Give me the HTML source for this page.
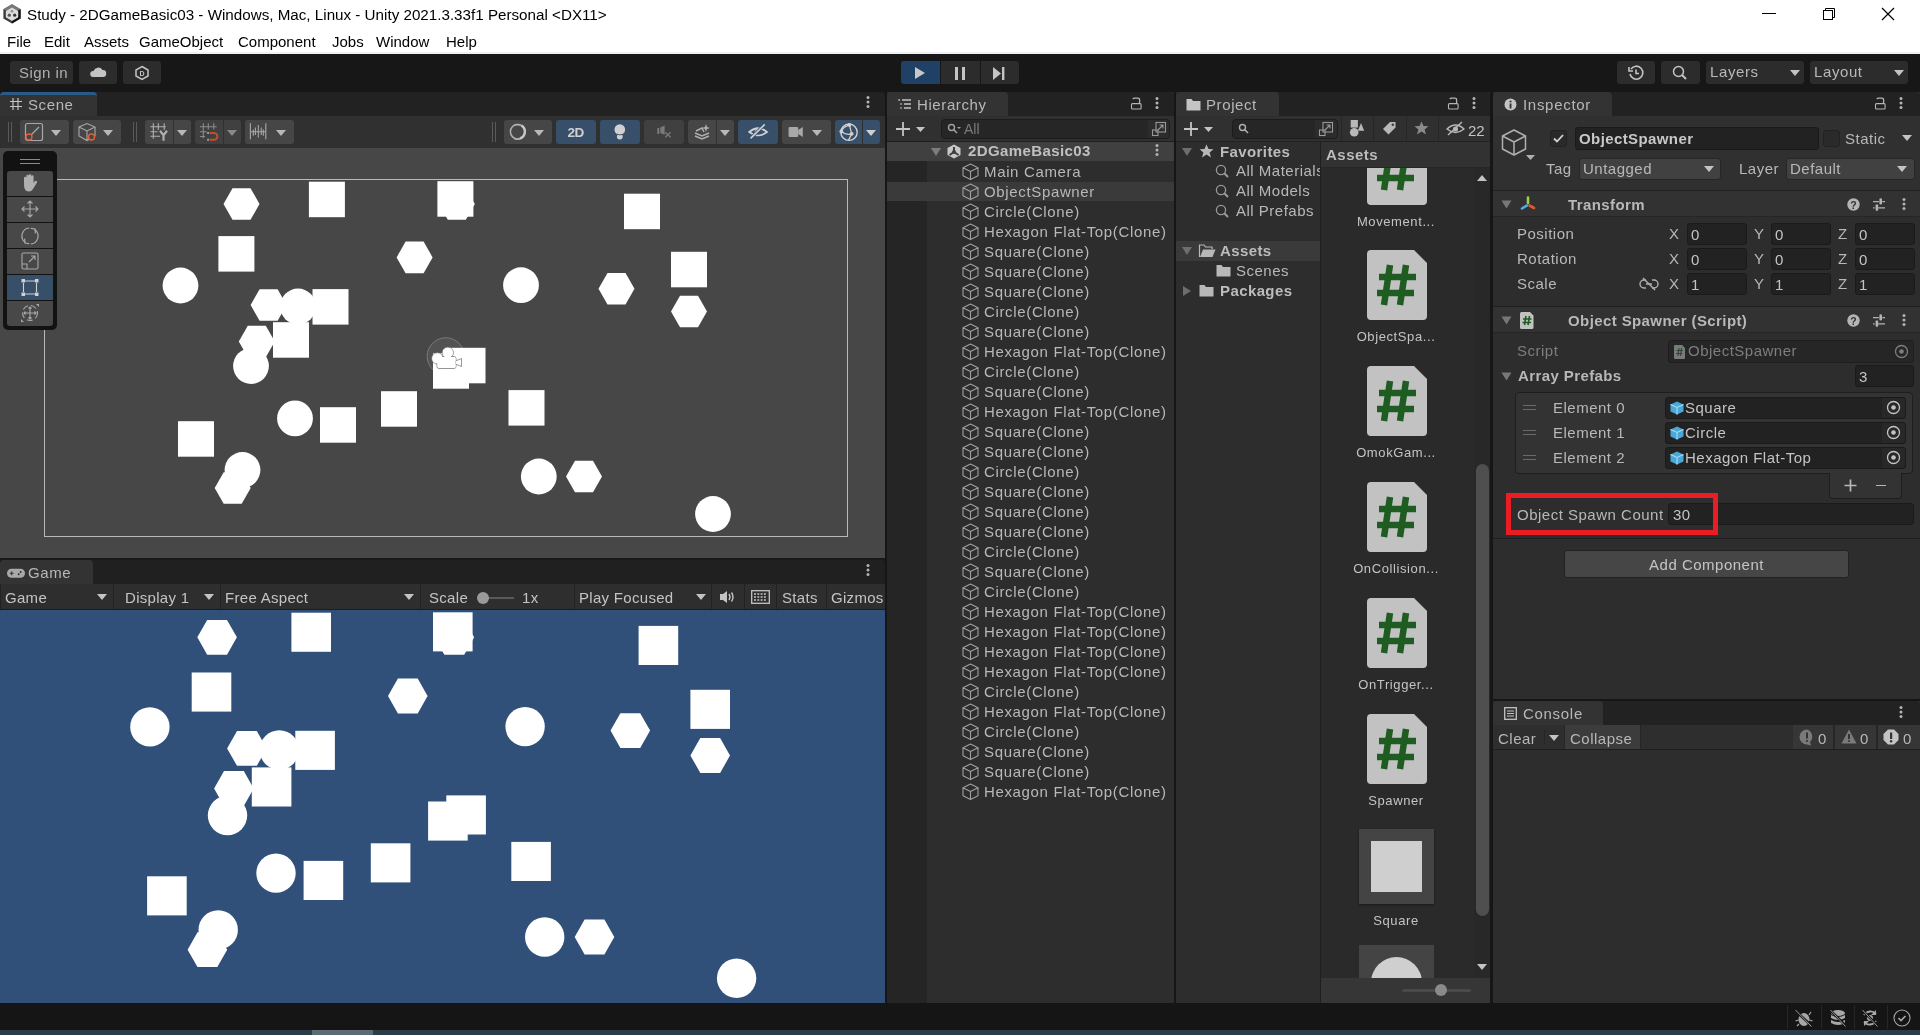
<!DOCTYPE html>
<html><head><meta charset="utf-8">
<style>
*{margin:0;padding:0;box-sizing:border-box}
html,body{width:1920px;height:1035px;overflow:hidden;background:#191919;font-family:"Liberation Sans",sans-serif;color:#c4c4c4}
.a{position:absolute}
.t{position:absolute;white-space:nowrap;line-height:1}
svg{position:absolute;overflow:visible}
.btn{position:absolute;background:#2c2c2c;border-radius:3px}
.tb{position:absolute;background:#3c3c3c;border-radius:3px}
.blue{background:#3a5272}
.ib{position:absolute;fill:none;stroke:#c4c4c4;stroke-width:1.2}
.f{position:absolute;background:#2a2a2a;border-radius:3px;border:1px solid #212121}
.tri{position:absolute;width:0;height:0;border-left:5px solid transparent;border-right:5px solid transparent;border-top:6px solid #c4c4c4}
</style></head><body>
<div id="root" style="position:absolute;left:0;top:0;width:1920px;height:1035px;will-change:transform;background:#191919;overflow:hidden">
<!-- title bar -->
<div class="a" style="left:0;top:0;width:1920px;height:54px;background:#fff"></div>
<div class="a" style="left:0;top:52px;width:1920px;height:2px;background:#f0f0f0"></div>
<svg style="left:3px;top:4px" width="18" height="20"><path d="M9 0.3 L17.6 5.2 V14.6 L9 19.6 L0.4 14.6 V5.2 Z" fill="#3a3a3a"/><path d="M9 0.3 L17.6 5.2 L9 10 L0.4 5.2 Z" fill="#7a7a7a"/><path d="M17.6 5.2 V14.6 L9 19.6 V10 Z" fill="#151515"/><path d="M9 4.2 L14.6 7.5 V13 L9 16.3 L3.4 13 V7.5 Z" fill="#dcdcdc" stroke="#dcdcdc" stroke-linejoin="round" stroke-width="1.2"/><circle cx="9" cy="7.3" r="1.3" fill="#8a8a8a"/><circle cx="6.3" cy="11.2" r="1.6" fill="#555"/><circle cx="11.7" cy="11.2" r="1.6" fill="#333"/></svg>
<div class="t" style="left:27px;top:7px;font-size:15.2px;color:#000">Study - 2DGameBasic03 - Windows, Mac, Linux - Unity 2021.3.33f1 Personal &lt;DX11&gt;</div>
<div class="a" style="left:1762px;top:13px;width:14px;height:1px;background:#000"></div>
<svg style="left:1822px;top:7px" width="14" height="14"><rect x="1.5" y="3.5" width="9" height="9" fill="none" stroke="#000"/><path d="M3.5 3.5 V1.5 H12.5 V10.5 H10.5" fill="none" stroke="#000"/></svg>
<svg style="left:1881px;top:7px" width="14" height="14"><path d="M1 1 L13 13 M13 1 L1 13" stroke="#000" stroke-width="1.2"/></svg>
<div class="t" style="left:7px;top:34px;font-size:15px;color:#000;word-spacing:0">File</div>
<div class="t" style="left:44px;top:34px;font-size:15px;color:#000">Edit</div>
<div class="t" style="left:84px;top:34px;font-size:15px;color:#000">Assets</div>
<div class="t" style="left:139px;top:34px;font-size:15px;color:#000">GameObject</div>
<div class="t" style="left:238px;top:34px;font-size:15px;color:#000">Component</div>
<div class="t" style="left:332px;top:34px;font-size:15px;color:#000">Jobs</div>
<div class="t" style="left:376px;top:34px;font-size:15px;color:#000">Window</div>
<div class="t" style="left:446px;top:34px;font-size:15px;color:#000">Help</div>

<!-- main toolbar -->
<div class="a" style="left:0;top:54px;width:1920px;height:38px;background:#171717"></div>
<div class="btn" style="left:10px;top:61px;width:63px;height:23px"></div>
<div class="t" style="left:19px;top:64.5px;font-size:15px;color:#b0b0b0;letter-spacing:0.45px">Sign in</div>
<div class="btn" style="left:79px;top:61px;width:38px;height:23px"></div>
<svg style="left:89px;top:66px" width="18" height="12"><path d="M4 11 H14 A3.5 3.5 0 0 0 13.5 4 A5 5 0 0 0 4.5 5 A3 3 0 0 0 4 11 Z" fill="#c4c4c4"/></svg>
<div class="btn" style="left:123px;top:61px;width:38px;height:23px"></div>
<svg style="left:134px;top:65px" width="16" height="16"><path d="M8 1.5 L14 5 V11 L8 14.5 L2 11 V5 Z" fill="none" stroke="#c4c4c4" stroke-width="1.5"/><text x="8" y="11" font-size="7" text-anchor="middle" fill="#c4c4c4" font-family="Liberation Sans" font-weight="bold">D</text></svg>
<div class="btn blue" style="left:901px;top:61px;width:39px;height:23px;background:#1f4166;border-radius:3px 0 0 3px"></div>
<svg style="left:914px;top:66px" width="12" height="14"><path d="M1 1 L11 7 L1 13 Z" fill="#c8c8c8"/></svg>
<div class="btn" style="left:941px;top:61px;width:39px;height:23px;border-radius:0"></div>
<div class="a" style="left:955px;top:67px;width:3px;height:13px;background:#c4c4c4"></div>
<div class="a" style="left:962px;top:67px;width:3px;height:13px;background:#c4c4c4"></div>
<div class="btn" style="left:981px;top:61px;width:38px;height:23px;border-radius:0 3px 3px 0"></div>
<svg style="left:992px;top:67px" width="14" height="13"><path d="M1 0 L9 6.5 L1 13 Z" fill="#c4c4c4"/><rect x="10" y="0" width="2.4" height="13" fill="#c4c4c4"/></svg>
<div class="btn" style="left:1617px;top:61px;width:38px;height:23px"></div>
<svg style="left:1627px;top:64px" width="18" height="18"><path d="M4 5 A6.5 6.5 0 1 1 3 10" fill="none" stroke="#c4c4c4" stroke-width="1.6"/><path d="M2 3 V7 H6" fill="none" stroke="#c4c4c4" stroke-width="1.6"/><path d="M9 5.5 V9.5 H12" fill="none" stroke="#c4c4c4" stroke-width="1.6"/></svg>
<div class="btn" style="left:1661px;top:61px;width:39px;height:23px"></div>
<svg style="left:1672px;top:65px" width="16" height="16"><circle cx="6.5" cy="6.5" r="5" fill="none" stroke="#c4c4c4" stroke-width="1.5"/><path d="M10 10 L14 14" stroke="#c4c4c4" stroke-width="2"/></svg>
<div class="btn" style="left:1706px;top:61px;width:98px;height:23px"></div>
<div class="t" style="left:1710px;top:64px;font-size:15px;color:#b8b8b8;letter-spacing:0.6px">Layers</div>
<div class="tri" style="left:1790px;top:70px"></div>
<div class="btn" style="left:1810px;top:61px;width:98px;height:23px"></div>
<div class="t" style="left:1814px;top:64px;font-size:15px;color:#b8b8b8;letter-spacing:0.6px">Layout</div>
<div class="tri" style="left:1894px;top:70px"></div>

<!-- SCENE PANEL -->
<div class="a" style="left:0;top:92px;width:885px;height:24px;background:#222;border-radius:4px 4px 0 0"></div>
<div class="a" style="left:0;top:92px;width:97px;height:24px;background:#333;border-radius:4px 4px 0 0;border-top:3px solid #2c5a88"></div>
<svg style="left:9px;top:97px" width="14" height="14"><path d="M4 1 V13 M9 1 V13 M1 4.5 H13 M1 9.5 H13" stroke="#c4c4c4" stroke-width="1.2"/></svg>
<div class="t" style="left:28px;top:97px;font-size:15px;color:#b8b8b8;letter-spacing:0.6px">Scene</div>
<svg style="left:866px;top:95px" width="4" height="14"><circle cx="2" cy="2.4" r="1.5" fill="#b4b4b4"/><circle cx="2" cy="7" r="1.5" fill="#b4b4b4"/><circle cx="2" cy="11.6" r="1.5" fill="#b4b4b4"/></svg>
<div class="a" style="left:0;top:116px;width:885px;height:32px;background:#303030"></div>
<div class="a" style="left:8px;top:122px;width:1px;height:20px;background:#5a5a5a"></div>
<div class="a" style="left:11px;top:122px;width:1px;height:20px;background:#5a5a5a"></div>
<div class="tb" style="left:20px;top:120px;width:49px;height:24px;background:#464646"></div>
<svg style="left:24px;top:122px" width="20" height="20"><rect x="1.5" y="1.5" width="17" height="17" rx="2" fill="none" stroke="#a8a8a8" stroke-width="1.2"/><path d="M6 14 L15 5" stroke="#a8a8a8" stroke-width="1.2"/><circle cx="5" cy="15" r="3" fill="#464646" stroke="#e0603a" stroke-width="1.4"/></svg>
<div class="tri" style="left:51px;top:130px;border-top-color:#b8b8b8"></div>
<div class="tb" style="left:73px;top:120px;width:48px;height:24px;background:#464646"></div>
<svg style="left:77px;top:122px" width="20" height="20"><path d="M2 5 L10 1.5 L18 5 V14 L10 18.5 L2 14 Z M2 5 L10 9 L18 5 M10 9 V18.5" fill="none" stroke="#a8a8a8" stroke-width="1.1"/><circle cx="14.5" cy="15" r="3" fill="#464646" stroke="#e0603a" stroke-width="1.4"/></svg>
<div class="tri" style="left:103px;top:130px;border-top-color:#b8b8b8"></div>
<div class="a" style="left:133px;top:122px;width:1px;height:20px;background:#5a5a5a"></div>
<div class="a" style="left:136px;top:122px;width:1px;height:20px;background:#5a5a5a"></div>
<div class="tb" style="left:145px;top:120px;width:28px;height:24px;background:#464646;border-radius:3px 0 0 3px"></div>
<svg style="left:150px;top:123px" width="20" height="20"><path d="M3.3 0.3 V15.8 M8.3 0.3 V7 M14.2 0.3 V7 M0.4 3.7 H15.8 M0.4 8.7 H7.5 M0.4 13.3 H10" stroke="#b0b0b0" stroke-width="1.1"/><path d="M10 7.8 L13.5 12.3 L17 7.8 M13.5 12.3 V17.8" fill="none" stroke="#b0b0b0" stroke-width="2.2"/></svg>
<div class="tb" style="left:174px;top:120px;width:17px;height:24px;background:#464646;border-radius:0 3px 3px 0"></div>
<div class="tri" style="left:177px;top:130px;border-top-color:#b8b8b8"></div>
<div class="tb" style="left:195px;top:120px;width:28px;height:24px;background:#404040;border-radius:3px 0 0 3px"></div>
<svg style="left:199px;top:123px" width="20" height="20"><path d="M4.3 0.3 V15.3 M9.3 0.3 V6.6 M14.75 0.3 V6.6 M1 3.7 H17.7 M1 8.7 H7.7 M1 13.5 H6" stroke="#8a8a8a" stroke-width="1.1"/><rect x="8.1" y="9" width="2.1" height="2" fill="#9a9a9a"/><rect x="8.1" y="15.8" width="2.1" height="2" fill="#9a9a9a"/><path d="M11 10 H15 A3.4 3.4 0 0 1 15 16.8 H11" fill="none" stroke="#c0502a" stroke-width="2"/></svg>
<div class="tb" style="left:224px;top:120px;width:17px;height:24px;background:#404040;border-radius:0 3px 3px 0"></div>
<div class="tri" style="left:227px;top:130px;border-top-color:#888"></div>
<div class="tb" style="left:245px;top:120px;width:49px;height:24px;background:#464646"></div>
<svg style="left:249px;top:123px" width="20" height="20"><path d="M1.4 0.3 V16.2 M16.8 0.3 V16.2 M4.3 6.6 V12.8 M6.4 4.5 V12 M9.3 2 V14.5 M12.25 4.5 V12 M14.3 6.6 V12.8 M1.4 8.7 H16.8" stroke="#a8a8a8" stroke-width="1.1"/></svg>
<div class="tri" style="left:276px;top:130px;border-top-color:#b8b8b8"></div>
<!-- right -->
<div class="a" style="left:492px;top:122px;width:1px;height:20px;background:#5a5a5a"></div>
<div class="a" style="left:495px;top:122px;width:1px;height:20px;background:#5a5a5a"></div>
<div class="tb" style="left:504px;top:120px;width:48px;height:24px;background:#464646"></div>
<svg style="left:508px;top:122px" width="20" height="20"><circle cx="9.7" cy="9.7" r="7.3" fill="none" stroke="#b0b0b0" stroke-width="1.5"/><path d="M13.5 3.5 A7.3 7.3 0 0 1 12 16.5" fill="none" stroke="#c8c8c8" stroke-width="2.4"/><path d="M6.5 2.6 H12.5" stroke="#b0b0b0" stroke-width="1.4"/><path d="M6.5 17 H12" stroke="#b0b0b0" stroke-width="1.6"/></svg>
<div class="tri" style="left:534px;top:130px;border-top-color:#b8b8b8"></div>
<div class="tb" style="left:556px;top:120px;width:40px;height:24px;background:#384f6a"></div>
<div class="t" style="left:567.5px;top:126px;font-size:13.5px;font-weight:bold;color:#d0d0d0;letter-spacing:-0.6px">2D</div>
<div class="tb" style="left:600px;top:120px;width:40px;height:24px;background:#384f6a"></div>
<svg style="left:610px;top:121px" width="20" height="22"><circle cx="9.8" cy="8.6" r="5.3" fill="#d0d0d0"/><circle cx="9.8" cy="15.6" r="2.9" fill="#d0d0d0"/><path d="M6.8 13.2 Q9.8 14.6 12.8 13.2" fill="none" stroke="#384f6a" stroke-width="0.9"/></svg>
<div class="tb" style="left:644px;top:120px;width:40px;height:24px;background:#404040"></div>
<svg style="left:655px;top:123px" width="18" height="17"><rect x="2.3" y="5" width="2" height="6" fill="#7a7a7a"/><path d="M5.3 4.5 L9.6 2.4 V11.8 L5.3 10 Z" fill="#7a7a7a"/><path d="M10.2 9.3 L15.6 14.2 M15.6 9.3 L10.2 14.2" stroke="#7a7a7a" stroke-width="1.3"/></svg>
<div class="tb" style="left:688px;top:120px;width:28px;height:24px;background:#464646;border-radius:3px 0 0 3px"></div>
<svg style="left:693px;top:123px" width="18" height="18"><path d="M2 10 L9 13 L16 10 M2 13 L9 16 L16 13" fill="none" stroke="#b0b0b0" stroke-width="1.5"/><path d="M3 8 L9 5 L11 9" fill="none" stroke="#b0b0b0" stroke-width="1.5"/><path d="M13 1 L14 4 L17 5 L14 6 L13 9 L12 6 L9 5 L12 4 Z" fill="#b0b0b0"/></svg>
<div class="tb" style="left:717px;top:120px;width:17px;height:24px;background:#464646;border-radius:0 3px 3px 0"></div>
<div class="tri" style="left:720px;top:130px;border-top-color:#b8b8b8"></div>
<div class="tb" style="left:738px;top:120px;width:40px;height:24px;background:#384f6a"></div>
<svg style="left:748px;top:122px" width="22" height="20"><path d="M1.2 10 Q10 2.5 19 10 Q10 17 1.2 10 Z" fill="none" stroke="#d0d0d0" stroke-width="1.7"/><path d="M7 11 Q8 7 12 6.5" fill="none" stroke="#d0d0d0" stroke-width="1.5"/><path d="M2.6 16.4 L16.7 2.4" stroke="#384f6a" stroke-width="3.2"/><path d="M2.6 16.4 L16.7 2.4" stroke="#d0d0d0" stroke-width="1.7"/></svg>
<div class="tb" style="left:782px;top:120px;width:49px;height:24px;background:#464646"></div>
<svg style="left:788px;top:126px" width="16" height="13"><rect x="0.6" y="1" width="9.6" height="10" rx="1.2" fill="#a8a8a8"/><path d="M10.2 4 L14.8 1 V11 L10.2 8 Z" fill="#a8a8a8"/></svg>
<div class="tri" style="left:812px;top:130px;border-top-color:#b8b8b8"></div>
<div class="tb" style="left:835px;top:120px;width:27px;height:24px;background:#384f6a;border-radius:3px 0 0 3px"></div>
<svg style="left:838px;top:121px" width="22" height="22"><circle cx="11" cy="11.2" r="8.2" fill="none" stroke="#d0d0d0" stroke-width="1.4"/><path d="M11.4 3.9 Q5 6 3.3 10.5 M11.4 3.9 L13.7 12.8 M3.3 10.5 Q8 14.5 13.7 12.8 M13.7 12.8 L10.5 19.4" fill="none" stroke="#d0d0d0" stroke-width="1.3"/><circle cx="11.4" cy="3.9" r="1.9" fill="#d0d0d0"/><circle cx="3.3" cy="10.5" r="1.9" fill="#d0d0d0"/><circle cx="13.7" cy="12.8" r="1.9" fill="#d0d0d0"/></svg>
<div class="tb" style="left:863px;top:120px;width:17px;height:24px;background:#384f6a;border-radius:0 3px 3px 0"></div>
<div class="tri" style="left:866px;top:130px;border-top-color:#d0d0d0"></div>

<div class="a" style="left:0;top:148px;width:885px;height:410px;background:#474747;overflow:hidden">
<div class="a" style="left:44px;top:31px;width:804px;height:358px;border:1px solid #b9b9b9"></div>
<svg style="left:0;top:0" width="885" height="410" fill="#fff"><circle cx="445.8" cy="208.4" r="18.6" fill="#525252" stroke="#7a7a7a" stroke-width="1"/>
<rect x="308.9" y="33.7" width="36.0" height="35.5"/>
<rect x="437.4" y="33.2" width="36.0" height="35.5"/>
<rect x="218.4" y="88.1" width="36.0" height="35.5"/>
<rect x="312.5" y="141.1" width="36.0" height="35.5"/>
<rect x="273.0" y="174.2" width="36.0" height="35.5"/>
<rect x="433.0" y="205.2" width="36.0" height="35.5"/>
<rect x="449.5" y="199.8" width="36.0" height="35.5"/>
<rect x="320.0" y="259.2" width="36.0" height="35.5"/>
<rect x="381.0" y="243.2" width="36.0" height="35.5"/>
<rect x="178.0" y="273.2" width="36.0" height="35.5"/>
<rect x="624.0" y="45.7" width="36.0" height="35.5"/>
<rect x="671.0" y="103.8" width="36.0" height="35.5"/>
<rect x="508.5" y="242.1" width="36.0" height="35.5"/>
<circle cx="180.5" cy="137.5" r="17.9"/>
<circle cx="298.0" cy="158.5" r="17.9"/>
<circle cx="251.0" cy="218.0" r="17.9"/>
<circle cx="295.0" cy="270.4" r="17.9"/>
<circle cx="242.5" cy="322.0" r="17.9"/>
<circle cx="521.0" cy="137.2" r="17.9"/>
<circle cx="538.8" cy="328.5" r="17.9"/>
<circle cx="713.0" cy="366.0" r="17.9"/>
<polygon points="223.5,56.0 232.5,40.2 250.5,40.2 259.5,56.0 250.5,71.8 232.5,71.8"/>
<polygon points="438.8,56.0 447.8,40.2 465.8,40.2 474.8,56.0 465.8,71.8 447.8,71.8"/>
<polygon points="396.6,109.4 405.6,93.6 423.6,93.6 432.6,109.4 423.6,125.2 405.6,125.2"/>
<polygon points="250.6,157.0 259.6,141.2 277.6,141.2 286.6,157.0 277.6,172.8 259.6,172.8"/>
<polygon points="238.8,193.5 247.8,177.7 265.8,177.7 274.8,193.5 265.8,209.3 247.8,209.3"/>
<polygon points="214.7,340.0 223.7,324.2 241.7,324.2 250.7,340.0 241.7,355.8 223.7,355.8"/>
<polygon points="598.5,140.8 607.5,125.0 625.5,125.0 634.5,140.8 625.5,156.6 607.5,156.6"/>
<polygon points="671.0,163.5 680.0,147.7 698.0,147.7 707.0,163.5 698.0,179.3 680.0,179.3"/>
<polygon points="566.0,328.5 575.0,312.7 593.0,312.7 602.0,328.5 593.0,344.3 575.0,344.3"/>
</svg>
<svg style="left:0;top:0" width="885" height="410"><g fill="#fff" stroke="#7a7a7a" stroke-width="0.8"><circle cx="437.4" cy="210.4" r="5.6"/><circle cx="447.8" cy="204.8" r="5.6"/><rect x="437" y="208.5" width="19" height="12" rx="2"/><path d="M455.5 213 L461.5 210.5 V218.5 L455.5 216 Z"/></g><g fill="#fff"><circle cx="437.4" cy="210.4" r="5"/><circle cx="447.8" cy="204.8" r="5"/><rect x="437.6" y="209" width="18" height="11" rx="1.5"/></g></svg>
<div class="a" style="left:3px;top:3px;width:54px;height:179px;background:#121212;border-radius:5px"></div>
<div class="a" style="left:20px;top:11px;width:20px;height:1px;background:#8a8a8a"></div>
<div class="a" style="left:20px;top:15px;width:20px;height:1px;background:#8a8a8a"></div>
<div class="a" style="left:7px;top:23px;width:46px;height:25px;background:#484848;border-radius:3px 3px 0 0"></div>
<div class="a" style="left:7px;top:49px;width:46px;height:25px;background:#484848"></div>
<div class="a" style="left:7px;top:75px;width:46px;height:25px;background:#484848"></div>
<div class="a" style="left:7px;top:101px;width:46px;height:25px;background:#484848"></div>
<div class="a" style="left:7px;top:127px;width:46px;height:25px;background:#384f6a"></div>
<div class="a" style="left:7px;top:153px;width:46px;height:25px;background:#484848;border-radius:0 0 3px 3px"></div>
<svg style="left:20px;top:25px" width="20" height="20"><path d="M4 10 V5 A1.2 1.2 0 0 1 6.4 5 V9 V3 A1.2 1.2 0 0 1 8.8 3 V9 V2.5 A1.2 1.2 0 0 1 11.2 2.5 V9 V3.5 A1.2 1.2 0 0 1 13.6 3.5 V10 L15 8 A1.3 1.3 0 0 1 17 9.5 L13 16 Q11.5 18.5 9 18.5 Q5 18.5 4.2 14 Z" fill="#b0b0b0"/></svg>
<svg style="left:20px;top:51px" width="20" height="20"><path d="M10 2 V18 M2 10 H18 M7.5 4.5 L10 2 L12.5 4.5 M7.5 15.5 L10 18 L12.5 15.5 M4.5 7.5 L2 10 L4.5 12.5 M15.5 7.5 L18 10 L15.5 12.5" fill="none" stroke="#a8a8a8" stroke-width="1.1"/></svg>
<svg style="left:20px;top:77px" width="20" height="22"><path d="M9.3 3 A8 8 0 0 0 5.4 17.55 M10.7 19 A8 8 0 0 0 14.6 4.45" fill="none" stroke="#a8a8a8" stroke-width="1.2"/><path d="M4.6 13.6 L5 18 L9.2 18.6 M15.4 8.4 L15 4 L10.8 3.4" fill="none" stroke="#a8a8a8" stroke-width="1.2"/></svg>
<svg style="left:20px;top:103px" width="20" height="20"><rect x="2" y="2" width="16" height="16" rx="1.5" fill="none" stroke="#a8a8a8" stroke-width="1.1"/><path d="M2 13 H7 V18 M9 11 L15 5 M11 5 H15 V9" fill="none" stroke="#a8a8a8" stroke-width="1.1"/></svg>
<svg style="left:20px;top:129px" width="20" height="20"><path d="M5 4 H15 M5 17 H15 M3.5 6 V15 M16.5 6 V15" stroke="#d0d0d0" stroke-width="1.1"/><rect x="1.5" y="2" width="3.5" height="3.5" fill="#d0d0d0"/><rect x="15" y="2" width="3.5" height="3.5" fill="#d0d0d0"/><rect x="1.5" y="15.5" width="3.5" height="3.5" fill="#d0d0d0"/><rect x="15" y="15.5" width="3.5" height="3.5" fill="#d0d0d0"/></svg>
<svg style="left:20px;top:155px" width="20" height="20"><circle cx="10" cy="10" r="7.5" fill="none" stroke="#a8a8a8" stroke-width="1.1" stroke-dasharray="6 3"/><path d="M10 4 V16 M4 10 H16 M8.5 5.5 L10 4 L11.5 5.5 M8.5 14.5 L10 16 L11.5 14.5 M5.5 8.5 L4 10 L5.5 11.5 M14.5 8.5 L16 10 L14.5 11.5" fill="none" stroke="#a8a8a8" stroke-width="1.1"/><path d="M16 1 L19 1 L19 4 Z M1 19 L1 16 L4 19 Z" fill="#a8a8a8"/></svg>

</div>

<!-- GAME PANEL -->
<div class="a" style="left:0;top:560px;width:885px;height:24px;background:#202020;border-radius:4px 4px 0 0"></div>
<div class="a" style="left:0;top:560px;width:93px;height:24px;background:#333;border-radius:4px 4px 0 0"></div>
<div class="t" style="left:28px;top:565px;font-size:15px;color:#b8b8b8;letter-spacing:0.6px">Game</div>
<svg style="left:866px;top:563px" width="4" height="14"><circle cx="2" cy="2.4" r="1.5" fill="#b4b4b4"/><circle cx="2" cy="7" r="1.5" fill="#b4b4b4"/><circle cx="2" cy="11.6" r="1.5" fill="#b4b4b4"/></svg>
<div class="a" style="left:0;top:584px;width:885px;height:26px;background:#2e2e2e"></div>
<svg style="left:7px;top:568px" width="18" height="11"><rect x="0" y="0.8" width="18" height="9" rx="4.5" fill="#a8a8a8"/><path d="M2.8 5.3 H6.6 M4.7 3.4 V7.2" stroke="#333" stroke-width="1.1"/><circle cx="13.6" cy="3.9" r="1" fill="#333"/><circle cx="11.7" cy="6.3" r="1" fill="#333"/></svg>
<div class="a" style="left:0;top:609px;width:885px;height:1px;background:#1c1c1c"></div>
<div class="a" style="left:113px;top:584px;width:1px;height:25px;background:#222"></div>
<div class="a" style="left:220px;top:584px;width:1px;height:25px;background:#222"></div>
<div class="a" style="left:420px;top:584px;width:1px;height:25px;background:#222"></div>
<div class="a" style="left:574px;top:584px;width:1px;height:25px;background:#222"></div>
<div class="a" style="left:711px;top:584px;width:1px;height:25px;background:#222"></div>
<div class="a" style="left:744px;top:584px;width:1px;height:25px;background:#222"></div>
<div class="a" style="left:776px;top:584px;width:1px;height:25px;background:#222"></div>
<div class="a" style="left:826px;top:584px;width:1px;height:25px;background:#222"></div>
<div class="a" style="left:0;top:584px;width:1px;height:25px;background:#222"></div>
<div class="t" style="left:5px;top:590px;font-size:15px;color:#c4c4c4;letter-spacing:0.3px">Game</div>
<div class="tri" style="left:97px;top:594px"></div>
<div class="t" style="left:125px;top:590px;font-size:15px;color:#c4c4c4;letter-spacing:0.3px">Display 1</div>
<div class="tri" style="left:204px;top:594px"></div>
<div class="t" style="left:225px;top:590px;font-size:15px;color:#c4c4c4;letter-spacing:0.3px">Free Aspect</div>
<div class="tri" style="left:404px;top:594px"></div>
<div class="t" style="left:429px;top:590px;font-size:15px;color:#c4c4c4;letter-spacing:0.3px">Scale</div>
<div class="a" style="left:478px;top:597px;width:36px;height:2px;background:#5a5a5a"></div>
<div class="a" style="left:477px;top:592px;width:12px;height:12px;border-radius:50%;background:#9a9a9a"></div>
<div class="t" style="left:522px;top:590px;font-size:15px;color:#c4c4c4;letter-spacing:0.3px">1x</div>
<div class="t" style="left:579px;top:590px;font-size:15px;color:#c4c4c4;letter-spacing:0.3px">Play Focused</div>
<div class="tri" style="left:696px;top:594px"></div>
<svg style="left:719px;top:590px" width="18" height="14"><path d="M1 4 H4 L8 1 V13 L4 10 H1 Z" fill="#c4c4c4"/><path d="M10 4 Q12 7 10 10 M12.5 2.5 Q15.5 7 12.5 11.5" fill="none" stroke="#c4c4c4" stroke-width="1.4"/></svg>
<svg style="left:751px;top:590px" width="19" height="14"><rect x="0.7" y="0.7" width="17.6" height="12.6" fill="none" stroke="#c4c4c4" stroke-width="1.3"/><path d="M3 4 H16 M3 7 H16 M3 10 H16" stroke="#c4c4c4" stroke-width="1.3" stroke-dasharray="2 1.3"/></svg>
<div class="t" style="left:782px;top:590px;font-size:15px;color:#c4c4c4;letter-spacing:0.3px">Stats</div>
<div class="t" style="left:831px;top:590px;font-size:15px;color:#c4c4c4;letter-spacing:0.3px">Gizmos</div>

<div class="a" style="left:0;top:610px;width:885px;height:393px;background:#30507a;overflow:hidden">
<svg style="left:0;top:0" width="885" height="393" fill="#fff">
<rect x="291.4" y="2.7" width="39.6" height="39.1"/>
<rect x="433.0" y="2.3" width="39.6" height="39.1"/>
<rect x="191.7" y="62.5" width="39.6" height="39.1"/>
<rect x="295.3" y="120.8" width="39.6" height="39.1"/>
<rect x="251.8" y="157.4" width="39.6" height="39.1"/>
<rect x="428.1" y="191.5" width="39.6" height="39.1"/>
<rect x="446.3" y="185.4" width="39.6" height="39.1"/>
<rect x="303.6" y="250.9" width="39.6" height="39.1"/>
<rect x="370.8" y="233.3" width="39.6" height="39.1"/>
<rect x="147.1" y="266.3" width="39.6" height="39.1"/>
<rect x="638.6" y="15.9" width="39.6" height="39.1"/>
<rect x="690.4" y="79.8" width="39.6" height="39.1"/>
<rect x="511.3" y="231.9" width="39.6" height="39.1"/>
<circle cx="149.9" cy="116.9" r="19.7"/>
<circle cx="279.3" cy="140.0" r="19.7"/>
<circle cx="227.5" cy="205.5" r="19.7"/>
<circle cx="276.0" cy="263.1" r="19.7"/>
<circle cx="218.2" cy="319.9" r="19.7"/>
<circle cx="525.1" cy="116.6" r="19.7"/>
<circle cx="544.7" cy="327.0" r="19.7"/>
<circle cx="736.6" cy="368.3" r="19.7"/>
<polygon points="197.3,27.3 207.2,9.9 227.0,9.9 236.9,27.3 227.0,44.7 207.2,44.7"/>
<polygon points="434.5,27.3 444.4,9.9 464.2,9.9 474.1,27.3 464.2,44.7 444.4,44.7"/>
<polygon points="388.0,86.0 397.9,68.6 417.7,68.6 427.6,86.0 417.7,103.4 397.9,103.4"/>
<polygon points="227.1,138.4 237.0,121.0 256.8,121.0 266.7,138.4 256.8,155.8 237.0,155.8"/>
<polygon points="214.1,178.5 224.0,161.1 243.8,161.1 253.7,178.5 243.8,195.9 224.0,195.9"/>
<polygon points="187.6,339.7 197.5,322.3 217.3,322.3 227.2,339.7 217.3,357.1 197.5,357.1"/>
<polygon points="610.5,120.6 620.4,103.2 640.2,103.2 650.1,120.6 640.2,137.9 620.4,137.9"/>
<polygon points="690.4,145.5 700.3,128.1 720.1,128.1 730.0,145.5 720.1,162.9 700.3,162.9"/>
<polygon points="574.7,327.0 584.6,309.6 604.4,309.6 614.3,327.0 604.4,344.4 584.6,344.4"/>
</svg>
</div>

<!-- HIERARCHY -->
<div class="a" style="left:885px;top:92px;width:2px;height:911px;background:#161616"></div>
<div class="a" style="left:887px;top:92px;width:287px;height:911px;background:#2d2d2d"></div>
<div class="a" style="left:887px;top:92px;width:287px;height:24px;background:#222;border-radius:4px 4px 0 0"></div>
<div class="a" style="left:887px;top:92px;width:121px;height:24px;background:#333;border-radius:4px 4px 0 0"></div>
<svg style="left:898px;top:98px" width="14" height="12"><path d="M4 2 H13 M6 6 H13 M6 10 H13" stroke="#c4c4c4" stroke-width="1.3"/><path d="M1 1 V3 M1 2 H2 M3 5 V7 M3 9 V11" stroke="#c4c4c4" stroke-width="1"/></svg>
<div class="t" style="left:917px;top:97px;font-size:15px;color:#b8b8b8;letter-spacing:0.6px">Hierarchy</div>
<svg style="left:1130px;top:96px" width="12" height="14"><path d="M9.6 7.5 V3.8 Q9.6 2.2 7.8 2.2 H4.5 Q3.4 2.2 2.8 3" fill="none" stroke="#b4b4b4" stroke-width="1.3"/><rect x="1.5" y="7.6" width="9.6" height="5.4" rx="1" fill="none" stroke="#b4b4b4" stroke-width="1.1"/></svg>
<svg style="left:1155px;top:96px" width="4" height="14"><circle cx="2" cy="2.4" r="1.5" fill="#b4b4b4"/><circle cx="2" cy="7" r="1.5" fill="#b4b4b4"/><circle cx="2" cy="11.6" r="1.5" fill="#b4b4b4"/></svg>
<div class="a" style="left:887px;top:116px;width:287px;height:25px;background:#303030"></div>
<svg style="left:895px;top:121px" width="32" height="16"><path d="M8 1 V15 M1 8 H15" stroke="#c4c4c4" stroke-width="1.8"/><path d="M21 6 H30 L25.5 11 Z" fill="#c4c4c4"/></svg>
<div class="a" style="left:941px;top:119px;width:229px;height:20px;background:#262626;border:1px solid #1c1c1c;border-radius:4px"></div>
<div class="a" style="left:1148px;top:120px;width:21px;height:18px;background:#2c2c2c;border-radius:0 3px 3px 0"></div>
<svg style="left:947px;top:123px" width="16" height="12"><circle cx="4.5" cy="4.5" r="3" fill="none" stroke="#a0a0a0" stroke-width="1.4"/><path d="M6.5 6.5 L10 10" stroke="#a0a0a0" stroke-width="1.6"/><path d="M10 4 H14 L12 6 Z" fill="#a0a0a0"/></svg>
<div class="t" style="left:964px;top:122px;font-size:14px;color:#7a7a7a">All</div>
<svg style="left:1151px;top:121px" width="16" height="16"><rect x="5" y="1.5" width="9.5" height="9.5" fill="none" stroke="#9a9a9a" stroke-width="1.1"/><rect x="1.5" y="9" width="5.5" height="5.5" fill="none" stroke="#9a9a9a" stroke-width="1.1"/><path d="M7 9 L12 4 M8.5 4 H12 V7.5" fill="none" stroke="#9a9a9a" stroke-width="1.1"/></svg>
<div class="a" style="left:887px;top:141px;width:287px;height:1px;background:#1e1e1e"></div>
<div class="a" style="left:887px;top:142px;width:287px;height:19px;background:#404040"></div>
<svg style="left:930px;top:147px" width="12" height="10"><path d="M1 1 H11 L6 9 Z" fill="#7c7c7c"/></svg>
<svg style="left:946px;top:143px" width="16" height="17"><path d="M8 1.5 L14.5 5 V12 L8 15.5 L1.5 12 V5 Z" fill="#c8c8c8"/><path d="M8 4 V9 M8 9 L3.5 12 M8 9 L12.5 12" stroke="#404040" stroke-width="2"/><circle cx="8" cy="9" r="2" fill="#404040"/></svg>
<div class="t" style="left:968px;top:143px;font-size:15px;font-weight:bold;color:#c0c0c0;letter-spacing:0.4px">2DGameBasic03</div>
<svg style="left:1155px;top:143px" width="4" height="14"><circle cx="2" cy="2.4" r="1.5" fill="#b4b4b4"/><circle cx="2" cy="7" r="1.5" fill="#b4b4b4"/><circle cx="2" cy="11.6" r="1.5" fill="#b4b4b4"/></svg>
<div class="a" style="left:887px;top:161px;width:40px;height:842px;background:#252525"></div>
<svg style="left:962px;top:162.5px" width="17" height="18"><path d="M8.5 1 L16 4.8 V12.8 L8.5 16.6 L1 12.8 V4.8 Z M1 4.8 L8.5 8.6 L16 4.8 M8.5 8.6 V16.6" fill="none" stroke="#a0a0a0" stroke-width="1.1" stroke-linejoin="round"/></svg>
<div class="t" style="left:984px;top:163.5px;font-size:15px;color:#b8b8b8;letter-spacing:0.65px">Main Camera</div>
<div class="a" style="left:887px;top:182px;width:287px;height:19px;background:#3a3a3a"></div>
<svg style="left:962px;top:182.5px" width="17" height="18"><path d="M8.5 1 L16 4.8 V12.8 L8.5 16.6 L1 12.8 V4.8 Z M1 4.8 L8.5 8.6 L16 4.8 M8.5 8.6 V16.6" fill="none" stroke="#a0a0a0" stroke-width="1.1" stroke-linejoin="round"/></svg>
<div class="t" style="left:984px;top:183.5px;font-size:15px;color:#b8b8b8;letter-spacing:0.65px">ObjectSpawner</div>
<svg style="left:962px;top:202.5px" width="17" height="18"><path d="M8.5 1 L16 4.8 V12.8 L8.5 16.6 L1 12.8 V4.8 Z M1 4.8 L8.5 8.6 L16 4.8 M8.5 8.6 V16.6" fill="none" stroke="#a0a0a0" stroke-width="1.1" stroke-linejoin="round"/></svg>
<div class="t" style="left:984px;top:203.5px;font-size:15px;color:#b8b8b8;letter-spacing:0.65px">Circle(Clone)</div>
<svg style="left:962px;top:222.5px" width="17" height="18"><path d="M8.5 1 L16 4.8 V12.8 L8.5 16.6 L1 12.8 V4.8 Z M1 4.8 L8.5 8.6 L16 4.8 M8.5 8.6 V16.6" fill="none" stroke="#a0a0a0" stroke-width="1.1" stroke-linejoin="round"/></svg>
<div class="t" style="left:984px;top:223.5px;font-size:15px;color:#b8b8b8;letter-spacing:0.65px">Hexagon Flat-Top(Clone)</div>
<svg style="left:962px;top:242.5px" width="17" height="18"><path d="M8.5 1 L16 4.8 V12.8 L8.5 16.6 L1 12.8 V4.8 Z M1 4.8 L8.5 8.6 L16 4.8 M8.5 8.6 V16.6" fill="none" stroke="#a0a0a0" stroke-width="1.1" stroke-linejoin="round"/></svg>
<div class="t" style="left:984px;top:243.5px;font-size:15px;color:#b8b8b8;letter-spacing:0.65px">Square(Clone)</div>
<svg style="left:962px;top:262.5px" width="17" height="18"><path d="M8.5 1 L16 4.8 V12.8 L8.5 16.6 L1 12.8 V4.8 Z M1 4.8 L8.5 8.6 L16 4.8 M8.5 8.6 V16.6" fill="none" stroke="#a0a0a0" stroke-width="1.1" stroke-linejoin="round"/></svg>
<div class="t" style="left:984px;top:263.5px;font-size:15px;color:#b8b8b8;letter-spacing:0.65px">Square(Clone)</div>
<svg style="left:962px;top:282.5px" width="17" height="18"><path d="M8.5 1 L16 4.8 V12.8 L8.5 16.6 L1 12.8 V4.8 Z M1 4.8 L8.5 8.6 L16 4.8 M8.5 8.6 V16.6" fill="none" stroke="#a0a0a0" stroke-width="1.1" stroke-linejoin="round"/></svg>
<div class="t" style="left:984px;top:283.5px;font-size:15px;color:#b8b8b8;letter-spacing:0.65px">Square(Clone)</div>
<svg style="left:962px;top:302.5px" width="17" height="18"><path d="M8.5 1 L16 4.8 V12.8 L8.5 16.6 L1 12.8 V4.8 Z M1 4.8 L8.5 8.6 L16 4.8 M8.5 8.6 V16.6" fill="none" stroke="#a0a0a0" stroke-width="1.1" stroke-linejoin="round"/></svg>
<div class="t" style="left:984px;top:303.5px;font-size:15px;color:#b8b8b8;letter-spacing:0.65px">Circle(Clone)</div>
<svg style="left:962px;top:322.5px" width="17" height="18"><path d="M8.5 1 L16 4.8 V12.8 L8.5 16.6 L1 12.8 V4.8 Z M1 4.8 L8.5 8.6 L16 4.8 M8.5 8.6 V16.6" fill="none" stroke="#a0a0a0" stroke-width="1.1" stroke-linejoin="round"/></svg>
<div class="t" style="left:984px;top:323.5px;font-size:15px;color:#b8b8b8;letter-spacing:0.65px">Square(Clone)</div>
<svg style="left:962px;top:342.5px" width="17" height="18"><path d="M8.5 1 L16 4.8 V12.8 L8.5 16.6 L1 12.8 V4.8 Z M1 4.8 L8.5 8.6 L16 4.8 M8.5 8.6 V16.6" fill="none" stroke="#a0a0a0" stroke-width="1.1" stroke-linejoin="round"/></svg>
<div class="t" style="left:984px;top:343.5px;font-size:15px;color:#b8b8b8;letter-spacing:0.65px">Hexagon Flat-Top(Clone)</div>
<svg style="left:962px;top:362.5px" width="17" height="18"><path d="M8.5 1 L16 4.8 V12.8 L8.5 16.6 L1 12.8 V4.8 Z M1 4.8 L8.5 8.6 L16 4.8 M8.5 8.6 V16.6" fill="none" stroke="#a0a0a0" stroke-width="1.1" stroke-linejoin="round"/></svg>
<div class="t" style="left:984px;top:363.5px;font-size:15px;color:#b8b8b8;letter-spacing:0.65px">Circle(Clone)</div>
<svg style="left:962px;top:382.5px" width="17" height="18"><path d="M8.5 1 L16 4.8 V12.8 L8.5 16.6 L1 12.8 V4.8 Z M1 4.8 L8.5 8.6 L16 4.8 M8.5 8.6 V16.6" fill="none" stroke="#a0a0a0" stroke-width="1.1" stroke-linejoin="round"/></svg>
<div class="t" style="left:984px;top:383.5px;font-size:15px;color:#b8b8b8;letter-spacing:0.65px">Square(Clone)</div>
<svg style="left:962px;top:402.5px" width="17" height="18"><path d="M8.5 1 L16 4.8 V12.8 L8.5 16.6 L1 12.8 V4.8 Z M1 4.8 L8.5 8.6 L16 4.8 M8.5 8.6 V16.6" fill="none" stroke="#a0a0a0" stroke-width="1.1" stroke-linejoin="round"/></svg>
<div class="t" style="left:984px;top:403.5px;font-size:15px;color:#b8b8b8;letter-spacing:0.65px">Hexagon Flat-Top(Clone)</div>
<svg style="left:962px;top:422.5px" width="17" height="18"><path d="M8.5 1 L16 4.8 V12.8 L8.5 16.6 L1 12.8 V4.8 Z M1 4.8 L8.5 8.6 L16 4.8 M8.5 8.6 V16.6" fill="none" stroke="#a0a0a0" stroke-width="1.1" stroke-linejoin="round"/></svg>
<div class="t" style="left:984px;top:423.5px;font-size:15px;color:#b8b8b8;letter-spacing:0.65px">Square(Clone)</div>
<svg style="left:962px;top:442.5px" width="17" height="18"><path d="M8.5 1 L16 4.8 V12.8 L8.5 16.6 L1 12.8 V4.8 Z M1 4.8 L8.5 8.6 L16 4.8 M8.5 8.6 V16.6" fill="none" stroke="#a0a0a0" stroke-width="1.1" stroke-linejoin="round"/></svg>
<div class="t" style="left:984px;top:443.5px;font-size:15px;color:#b8b8b8;letter-spacing:0.65px">Square(Clone)</div>
<svg style="left:962px;top:462.5px" width="17" height="18"><path d="M8.5 1 L16 4.8 V12.8 L8.5 16.6 L1 12.8 V4.8 Z M1 4.8 L8.5 8.6 L16 4.8 M8.5 8.6 V16.6" fill="none" stroke="#a0a0a0" stroke-width="1.1" stroke-linejoin="round"/></svg>
<div class="t" style="left:984px;top:463.5px;font-size:15px;color:#b8b8b8;letter-spacing:0.65px">Circle(Clone)</div>
<svg style="left:962px;top:482.5px" width="17" height="18"><path d="M8.5 1 L16 4.8 V12.8 L8.5 16.6 L1 12.8 V4.8 Z M1 4.8 L8.5 8.6 L16 4.8 M8.5 8.6 V16.6" fill="none" stroke="#a0a0a0" stroke-width="1.1" stroke-linejoin="round"/></svg>
<div class="t" style="left:984px;top:483.5px;font-size:15px;color:#b8b8b8;letter-spacing:0.65px">Square(Clone)</div>
<svg style="left:962px;top:502.5px" width="17" height="18"><path d="M8.5 1 L16 4.8 V12.8 L8.5 16.6 L1 12.8 V4.8 Z M1 4.8 L8.5 8.6 L16 4.8 M8.5 8.6 V16.6" fill="none" stroke="#a0a0a0" stroke-width="1.1" stroke-linejoin="round"/></svg>
<div class="t" style="left:984px;top:503.5px;font-size:15px;color:#b8b8b8;letter-spacing:0.65px">Square(Clone)</div>
<svg style="left:962px;top:522.5px" width="17" height="18"><path d="M8.5 1 L16 4.8 V12.8 L8.5 16.6 L1 12.8 V4.8 Z M1 4.8 L8.5 8.6 L16 4.8 M8.5 8.6 V16.6" fill="none" stroke="#a0a0a0" stroke-width="1.1" stroke-linejoin="round"/></svg>
<div class="t" style="left:984px;top:523.5px;font-size:15px;color:#b8b8b8;letter-spacing:0.65px">Square(Clone)</div>
<svg style="left:962px;top:542.5px" width="17" height="18"><path d="M8.5 1 L16 4.8 V12.8 L8.5 16.6 L1 12.8 V4.8 Z M1 4.8 L8.5 8.6 L16 4.8 M8.5 8.6 V16.6" fill="none" stroke="#a0a0a0" stroke-width="1.1" stroke-linejoin="round"/></svg>
<div class="t" style="left:984px;top:543.5px;font-size:15px;color:#b8b8b8;letter-spacing:0.65px">Circle(Clone)</div>
<svg style="left:962px;top:562.5px" width="17" height="18"><path d="M8.5 1 L16 4.8 V12.8 L8.5 16.6 L1 12.8 V4.8 Z M1 4.8 L8.5 8.6 L16 4.8 M8.5 8.6 V16.6" fill="none" stroke="#a0a0a0" stroke-width="1.1" stroke-linejoin="round"/></svg>
<div class="t" style="left:984px;top:563.5px;font-size:15px;color:#b8b8b8;letter-spacing:0.65px">Square(Clone)</div>
<svg style="left:962px;top:582.5px" width="17" height="18"><path d="M8.5 1 L16 4.8 V12.8 L8.5 16.6 L1 12.8 V4.8 Z M1 4.8 L8.5 8.6 L16 4.8 M8.5 8.6 V16.6" fill="none" stroke="#a0a0a0" stroke-width="1.1" stroke-linejoin="round"/></svg>
<div class="t" style="left:984px;top:583.5px;font-size:15px;color:#b8b8b8;letter-spacing:0.65px">Circle(Clone)</div>
<svg style="left:962px;top:602.5px" width="17" height="18"><path d="M8.5 1 L16 4.8 V12.8 L8.5 16.6 L1 12.8 V4.8 Z M1 4.8 L8.5 8.6 L16 4.8 M8.5 8.6 V16.6" fill="none" stroke="#a0a0a0" stroke-width="1.1" stroke-linejoin="round"/></svg>
<div class="t" style="left:984px;top:603.5px;font-size:15px;color:#b8b8b8;letter-spacing:0.65px">Hexagon Flat-Top(Clone)</div>
<svg style="left:962px;top:622.5px" width="17" height="18"><path d="M8.5 1 L16 4.8 V12.8 L8.5 16.6 L1 12.8 V4.8 Z M1 4.8 L8.5 8.6 L16 4.8 M8.5 8.6 V16.6" fill="none" stroke="#a0a0a0" stroke-width="1.1" stroke-linejoin="round"/></svg>
<div class="t" style="left:984px;top:623.5px;font-size:15px;color:#b8b8b8;letter-spacing:0.65px">Hexagon Flat-Top(Clone)</div>
<svg style="left:962px;top:642.5px" width="17" height="18"><path d="M8.5 1 L16 4.8 V12.8 L8.5 16.6 L1 12.8 V4.8 Z M1 4.8 L8.5 8.6 L16 4.8 M8.5 8.6 V16.6" fill="none" stroke="#a0a0a0" stroke-width="1.1" stroke-linejoin="round"/></svg>
<div class="t" style="left:984px;top:643.5px;font-size:15px;color:#b8b8b8;letter-spacing:0.65px">Hexagon Flat-Top(Clone)</div>
<svg style="left:962px;top:662.5px" width="17" height="18"><path d="M8.5 1 L16 4.8 V12.8 L8.5 16.6 L1 12.8 V4.8 Z M1 4.8 L8.5 8.6 L16 4.8 M8.5 8.6 V16.6" fill="none" stroke="#a0a0a0" stroke-width="1.1" stroke-linejoin="round"/></svg>
<div class="t" style="left:984px;top:663.5px;font-size:15px;color:#b8b8b8;letter-spacing:0.65px">Hexagon Flat-Top(Clone)</div>
<svg style="left:962px;top:682.5px" width="17" height="18"><path d="M8.5 1 L16 4.8 V12.8 L8.5 16.6 L1 12.8 V4.8 Z M1 4.8 L8.5 8.6 L16 4.8 M8.5 8.6 V16.6" fill="none" stroke="#a0a0a0" stroke-width="1.1" stroke-linejoin="round"/></svg>
<div class="t" style="left:984px;top:683.5px;font-size:15px;color:#b8b8b8;letter-spacing:0.65px">Circle(Clone)</div>
<svg style="left:962px;top:702.5px" width="17" height="18"><path d="M8.5 1 L16 4.8 V12.8 L8.5 16.6 L1 12.8 V4.8 Z M1 4.8 L8.5 8.6 L16 4.8 M8.5 8.6 V16.6" fill="none" stroke="#a0a0a0" stroke-width="1.1" stroke-linejoin="round"/></svg>
<div class="t" style="left:984px;top:703.5px;font-size:15px;color:#b8b8b8;letter-spacing:0.65px">Hexagon Flat-Top(Clone)</div>
<svg style="left:962px;top:722.5px" width="17" height="18"><path d="M8.5 1 L16 4.8 V12.8 L8.5 16.6 L1 12.8 V4.8 Z M1 4.8 L8.5 8.6 L16 4.8 M8.5 8.6 V16.6" fill="none" stroke="#a0a0a0" stroke-width="1.1" stroke-linejoin="round"/></svg>
<div class="t" style="left:984px;top:723.5px;font-size:15px;color:#b8b8b8;letter-spacing:0.65px">Circle(Clone)</div>
<svg style="left:962px;top:742.5px" width="17" height="18"><path d="M8.5 1 L16 4.8 V12.8 L8.5 16.6 L1 12.8 V4.8 Z M1 4.8 L8.5 8.6 L16 4.8 M8.5 8.6 V16.6" fill="none" stroke="#a0a0a0" stroke-width="1.1" stroke-linejoin="round"/></svg>
<div class="t" style="left:984px;top:743.5px;font-size:15px;color:#b8b8b8;letter-spacing:0.65px">Square(Clone)</div>
<svg style="left:962px;top:762.5px" width="17" height="18"><path d="M8.5 1 L16 4.8 V12.8 L8.5 16.6 L1 12.8 V4.8 Z M1 4.8 L8.5 8.6 L16 4.8 M8.5 8.6 V16.6" fill="none" stroke="#a0a0a0" stroke-width="1.1" stroke-linejoin="round"/></svg>
<div class="t" style="left:984px;top:763.5px;font-size:15px;color:#b8b8b8;letter-spacing:0.65px">Square(Clone)</div>
<svg style="left:962px;top:782.5px" width="17" height="18"><path d="M8.5 1 L16 4.8 V12.8 L8.5 16.6 L1 12.8 V4.8 Z M1 4.8 L8.5 8.6 L16 4.8 M8.5 8.6 V16.6" fill="none" stroke="#a0a0a0" stroke-width="1.1" stroke-linejoin="round"/></svg>
<div class="t" style="left:984px;top:783.5px;font-size:15px;color:#b8b8b8;letter-spacing:0.65px">Hexagon Flat-Top(Clone)</div>
<!-- PROJECT -->
<div class="a" style="left:1174px;top:92px;width:2px;height:911px;background:#161616"></div>
<div class="a" style="left:1176px;top:92px;width:314px;height:911px;background:#2d2d2d"></div>
<div class="a" style="left:1176px;top:92px;width:314px;height:24px;background:#222;border-radius:4px 4px 0 0"></div>
<div class="a" style="left:1176px;top:92px;width:103px;height:24px;background:#333;border-radius:4px 4px 0 0"></div>
<svg style="left:1186px;top:98px" width="15" height="13"><path d="M0.5 1 H5.5 L7 3 H14.5 V12.5 H0.5 Z" fill="#c4c4c4"/></svg>
<div class="t" style="left:1206px;top:97px;font-size:15px;color:#b8b8b8;letter-spacing:0.6px">Project</div>
<svg style="left:1447px;top:96px" width="12" height="14"><path d="M9.6 7.5 V3.8 Q9.6 2.2 7.8 2.2 H4.5 Q3.4 2.2 2.8 3" fill="none" stroke="#b4b4b4" stroke-width="1.3"/><rect x="1.5" y="7.6" width="9.6" height="5.4" rx="1" fill="none" stroke="#b4b4b4" stroke-width="1.1"/></svg>
<svg style="left:1472px;top:96px" width="4" height="14"><circle cx="2" cy="2.4" r="1.5" fill="#b4b4b4"/><circle cx="2" cy="7" r="1.5" fill="#b4b4b4"/><circle cx="2" cy="11.6" r="1.5" fill="#b4b4b4"/></svg>
<div class="a" style="left:1176px;top:116px;width:314px;height:25px;background:#303030"></div>
<svg style="left:1183px;top:121px" width="32" height="16"><path d="M8 1 V15 M1 8 H15" stroke="#c4c4c4" stroke-width="1.8"/><path d="M21 6 H30 L25.5 11 Z" fill="#c4c4c4"/></svg>
<div class="a" style="left:1232px;top:119px;width:106px;height:20px;background:#262626;border:1px solid #1c1c1c;border-radius:4px"></div>
<div class="a" style="left:1315px;top:120px;width:22px;height:18px;background:#2c2c2c;border-radius:0 3px 3px 0"></div>
<svg style="left:1238px;top:123px" width="12" height="12"><circle cx="4.5" cy="4.5" r="3" fill="none" stroke="#b0b0b0" stroke-width="1.4"/><path d="M6.5 6.5 L10 10" stroke="#b0b0b0" stroke-width="1.6"/></svg>
<svg style="left:1318px;top:121px" width="16" height="16"><rect x="5" y="1.5" width="9.5" height="9.5" fill="none" stroke="#9a9a9a" stroke-width="1.1"/><rect x="1.5" y="9" width="5.5" height="5.5" fill="none" stroke="#9a9a9a" stroke-width="1.1"/><path d="M7 9 L12 4 M8.5 4 H12 V7.5" fill="none" stroke="#9a9a9a" stroke-width="1.1"/></svg>
<div class="a" style="left:1341px;top:116px;width:1px;height:25px;background:#262626"></div>
<div class="a" style="left:1373px;top:116px;width:1px;height:25px;background:#262626"></div>
<div class="a" style="left:1406px;top:116px;width:1px;height:25px;background:#262626"></div>
<div class="a" style="left:1438px;top:116px;width:1px;height:25px;background:#262626"></div>
<svg style="left:1348px;top:118px" width="18" height="19"><rect x="2.7" y="2" width="7.2" height="7.6" fill="#b8b8b8"/><circle cx="6.2" cy="14.2" r="4.3" fill="#b8b8b8"/><path d="M9.9 12.7 L13 5 L16.2 12.7 Z" fill="#b8b8b8"/></svg>
<svg style="left:1382px;top:121px" width="15" height="14"><path d="M1 8 L8 1 H13.5 V6.5 L6.5 13.5 Z" fill="#b8b8b8"/><circle cx="10.8" cy="3.7" r="1.2" fill="#383838"/></svg>
<svg style="left:1414px;top:121px" width="15" height="14"><path d="M7.5 0.5 L9.5 5 L14.5 5.2 L10.6 8.4 L12 13.5 L7.5 10.6 L3 13.5 L4.4 8.4 L0.5 5.2 L5.5 5 Z" fill="#8a8a8a"/></svg>
<svg style="left:1446px;top:121px" width="19" height="15"><path d="M1 8 Q9.5 0 18 8 Q9.5 15 1 8 Z" fill="none" stroke="#b8b8b8" stroke-width="1.3"/><circle cx="9.5" cy="8" r="2.5" fill="#b8b8b8"/><path d="M2 14 L16 1" stroke="#b8b8b8" stroke-width="1.4"/></svg>
<div class="t" style="left:1468px;top:123px;font-size:15px;color:#c4c4c4">22</div>
<div class="a" style="left:1176px;top:141px;width:314px;height:1px;background:#222"></div>
<svg style="left:1181px;top:147px" width="12" height="10"><path d="M1 1 H11 L6 9 Z" fill="#6e6e6e"/></svg>
<svg style="left:1199px;top:144px" width="15" height="14"><path d="M7.5 0.5 L9.5 5 L14.5 5.2 L10.6 8.4 L12 13.5 L7.5 10.6 L3 13.5 L4.4 8.4 L0.5 5.2 L5.5 5 Z" fill="#b8b8b8"/></svg>
<div class="t" style="left:1220px;top:143.5px;font-size:15px;font-weight:bold;color:#bcbcbc;letter-spacing:0.4px">Favorites</div>
<svg style="left:1215px;top:164px" width="16" height="16"><circle cx="6" cy="6" r="4.6" fill="none" stroke="#9a9a9a" stroke-width="1.3"/><path d="M9.3 9.3 L13 13" stroke="#9a9a9a" stroke-width="2"/></svg>
<div class="t" style="left:1236px;top:162.8px;font-size:15px;color:#b8b8b8;letter-spacing:0.5px;width:84px;overflow:hidden">All Materials</div>
<svg style="left:1215px;top:184px" width="16" height="16"><circle cx="6" cy="6" r="4.6" fill="none" stroke="#9a9a9a" stroke-width="1.3"/><path d="M9.3 9.3 L13 13" stroke="#9a9a9a" stroke-width="2"/></svg>
<div class="t" style="left:1236px;top:182.8px;font-size:15px;color:#b8b8b8;letter-spacing:0.5px;width:84px;overflow:hidden">All Models</div>
<svg style="left:1215px;top:204px" width="16" height="16"><circle cx="6" cy="6" r="4.6" fill="none" stroke="#9a9a9a" stroke-width="1.3"/><path d="M9.3 9.3 L13 13" stroke="#9a9a9a" stroke-width="2"/></svg>
<div class="t" style="left:1236px;top:202.8px;font-size:15px;color:#b8b8b8;letter-spacing:0.5px;width:84px;overflow:hidden">All Prefabs</div>
<div class="a" style="left:1176px;top:241px;width:144px;height:20px;background:#3a3a3a"></div>
<svg style="left:1181px;top:246px" width="12" height="10"><path d="M1 1 H11 L6 9 Z" fill="#6e6e6e"/></svg>
<svg style="left:1199px;top:244px" width="17" height="14"><path d="M0.5 13 V1 H5 L6.5 3 H13 V5" fill="none" stroke="#b8b8b8" stroke-width="1.2"/><path d="M1 13 L4 5.5 H16.5 L13.5 13 Z" fill="#b8b8b8"/></svg>
<div class="t" style="left:1220px;top:242.5px;font-size:15px;font-weight:bold;color:#bcbcbc;letter-spacing:0.4px">Assets</div>
<svg style="left:1216px;top:264px" width="15" height="13"><path d="M0.5 1 H5.5 L7 3 H14.5 V12.5 H0.5 Z" fill="#b8b8b8"/></svg>
<div class="t" style="left:1236px;top:262.5px;font-size:15px;color:#b8b8b8;letter-spacing:0.5px">Scenes</div>
<svg style="left:1182px;top:285px" width="10" height="12"><path d="M1 1 V11 L9 6 Z" fill="#6e6e6e"/></svg>
<svg style="left:1199px;top:284px" width="15" height="13"><path d="M0.5 1 H5.5 L7 3 H14.5 V12.5 H0.5 Z" fill="#b8b8b8"/></svg>
<div class="t" style="left:1220px;top:282.5px;font-size:15px;font-weight:bold;color:#bcbcbc;letter-spacing:0.4px">Packages</div>
<div class="a" style="left:1320px;top:142px;width:1px;height:861px;background:#1f1f1f"></div>
<div class="a" style="left:1321px;top:142px;width:169px;height:26px;background:#323232;border-bottom:1px solid #262626"></div>
<div class="t" style="left:1326px;top:147px;font-size:15px;font-weight:bold;color:#bcbcbc;letter-spacing:0.5px">Assets</div>
<div class="a" style="left:1321px;top:168px;width:153px;height:810px;overflow:hidden;background:#2a2a2a">
<svg style="left:46px;top:-33px" width="60" height="70"><path d="M4 0 H47 L60 13 V66 A4 4 0 0 1 56 70 H4 A4 4 0 0 1 0 66 V4 A4 4 0 0 1 4 0 Z" fill="#c2c2c2"/><path d="M23 15 L17 55 M39 15 L33 55 M12 27 H49 M10 43 H47" stroke="#1f5c22" stroke-width="6.5"/></svg>
<div class="t" style="left:0;width:150px;text-align:center;top:47px;font-size:13px;color:#c4c4c4;letter-spacing:0.6px">Movement...</div>
<svg style="left:46px;top:82px" width="60" height="70"><path d="M4 0 H47 L60 13 V66 A4 4 0 0 1 56 70 H4 A4 4 0 0 1 0 66 V4 A4 4 0 0 1 4 0 Z" fill="#c2c2c2"/><path d="M23 15 L17 55 M39 15 L33 55 M12 27 H49 M10 43 H47" stroke="#1f5c22" stroke-width="6.5"/></svg>
<div class="t" style="left:0;width:150px;text-align:center;top:162px;font-size:13px;color:#c4c4c4;letter-spacing:0.6px">ObjectSpa...</div>
<svg style="left:46px;top:198px" width="60" height="70"><path d="M4 0 H47 L60 13 V66 A4 4 0 0 1 56 70 H4 A4 4 0 0 1 0 66 V4 A4 4 0 0 1 4 0 Z" fill="#c2c2c2"/><path d="M23 15 L17 55 M39 15 L33 55 M12 27 H49 M10 43 H47" stroke="#1f5c22" stroke-width="6.5"/></svg>
<div class="t" style="left:0;width:150px;text-align:center;top:278px;font-size:13px;color:#c4c4c4;letter-spacing:0.6px">OmokGam...</div>
<svg style="left:46px;top:314px" width="60" height="70"><path d="M4 0 H47 L60 13 V66 A4 4 0 0 1 56 70 H4 A4 4 0 0 1 0 66 V4 A4 4 0 0 1 4 0 Z" fill="#c2c2c2"/><path d="M23 15 L17 55 M39 15 L33 55 M12 27 H49 M10 43 H47" stroke="#1f5c22" stroke-width="6.5"/></svg>
<div class="t" style="left:0;width:150px;text-align:center;top:394px;font-size:13px;color:#c4c4c4;letter-spacing:0.6px">OnCollision...</div>
<svg style="left:46px;top:430px" width="60" height="70"><path d="M4 0 H47 L60 13 V66 A4 4 0 0 1 56 70 H4 A4 4 0 0 1 0 66 V4 A4 4 0 0 1 4 0 Z" fill="#c2c2c2"/><path d="M23 15 L17 55 M39 15 L33 55 M12 27 H49 M10 43 H47" stroke="#1f5c22" stroke-width="6.5"/></svg>
<div class="t" style="left:0;width:150px;text-align:center;top:510px;font-size:13px;color:#c4c4c4;letter-spacing:0.6px">OnTrigger...</div>
<svg style="left:46px;top:546px" width="60" height="70"><path d="M4 0 H47 L60 13 V66 A4 4 0 0 1 56 70 H4 A4 4 0 0 1 0 66 V4 A4 4 0 0 1 4 0 Z" fill="#c2c2c2"/><path d="M23 15 L17 55 M39 15 L33 55 M12 27 H49 M10 43 H47" stroke="#1f5c22" stroke-width="6.5"/></svg>
<div class="t" style="left:0;width:150px;text-align:center;top:626px;font-size:13px;color:#c4c4c4;letter-spacing:0.6px">Spawner</div>
<div class="a" style="left:38px;top:661px;width:75px;height:75px;background:#444;box-shadow:0 1px 2px #1a1a1a"></div>
<div class="a" style="left:50px;top:673px;width:51px;height:51px;background:#cfcfcf"></div>
<div class="t" style="left:0;width:150px;text-align:center;top:746px;font-size:13px;color:#c4c4c4;letter-spacing:0.6px">Square</div>
<div class="a" style="left:38px;top:777px;width:75px;height:75px;background:#444"></div>
<div class="a" style="left:50px;top:789px;width:51px;height:51px;background:#cfcfcf;border-radius:50%"></div>
</div>
<div class="a" style="left:1474px;top:168px;width:16px;height:810px;background:#282828"></div>
<svg style="left:1477px;top:174px" width="10" height="8"><path d="M0 7 H10 L5 1 Z" fill="#c4c4c4"/></svg>
<svg style="left:1477px;top:963px" width="10" height="8"><path d="M0 1 H10 L5 7 Z" fill="#c4c4c4"/></svg>
<div class="a" style="left:1476px;top:464px;width:13px;height:452px;background:#4f4f4f;border-radius:7px"></div>
<div class="a" style="left:1321px;top:978px;width:169px;height:25px;background:#363636"></div>
<div class="a" style="left:1402px;top:989px;width:69px;height:3px;background:#4a4a4a;border-radius:2px"></div>
<div class="a" style="left:1435px;top:984px;width:12px;height:12px;background:#8a8a8a;border-radius:50%"></div>
<!-- INSPECTOR -->
<div class="a" style="left:1490px;top:92px;width:3px;height:911px;background:#161616"></div>
<div class="a" style="left:1493px;top:92px;width:427px;height:607px;background:#2d2d2d"></div>
<div class="a" style="left:1493px;top:92px;width:427px;height:24px;background:#222;border-radius:4px 4px 0 0"></div>
<div class="a" style="left:1493px;top:92px;width:119px;height:24px;background:#333;border-radius:4px 4px 0 0"></div>
<svg style="left:1504px;top:98px" width="13" height="13"><circle cx="6.5" cy="6.5" r="6" fill="#c4c4c4"/><rect x="5.6" y="5.5" width="1.9" height="5" fill="#353535"/><circle cx="6.5" cy="3.5" r="1.1" fill="#353535"/></svg>
<div class="t" style="left:1523px;top:97px;font-size:15px;color:#b8b8b8;letter-spacing:0.5px;letter-spacing:0.7px">Inspector</div>
<svg style="left:1874px;top:96px" width="12" height="14"><path d="M9.6 7.5 V3.8 Q9.6 2.2 7.8 2.2 H4.5 Q3.4 2.2 2.8 3" fill="none" stroke="#b4b4b4" stroke-width="1.3"/><rect x="1.5" y="7.6" width="9.6" height="5.4" rx="1" fill="none" stroke="#b4b4b4" stroke-width="1.1"/></svg>
<svg style="left:1899px;top:96px" width="4" height="14"><circle cx="2" cy="2.4" r="1.5" fill="#b4b4b4"/><circle cx="2" cy="7" r="1.5" fill="#b4b4b4"/><circle cx="2" cy="11.6" r="1.5" fill="#b4b4b4"/></svg>
<div class="a" style="left:1493px;top:116px;width:427px;height:74px;background:#303030"></div>
<svg style="left:1500px;top:128px" width="36" height="36"><path d="M14 2 L25.5 8 V21 L14 27 L2.5 21 V8 Z M2.5 8 L14 14 L25.5 8 M14 14 V27" fill="none" stroke="#b0b0b0" stroke-width="1.5" stroke-linejoin="round"/><path d="M26 27 H35 L30.5 32 Z" fill="#b0b0b0"/></svg>
<div class="a" style="left:1550px;top:130px;width:17px;height:17px;background:#2a2a2a;border:1px solid #222;border-radius:3px"></div>
<svg style="left:1552px;top:132px" width="13" height="13"><path d="M2 6.5 L5 9.5 L11 3" fill="none" stroke="#d4d4d4" stroke-width="1.8"/></svg>
<div class="a" style="left:1575px;top:127px;width:244px;height:23px;background:#222;border:1px solid #1a1a1a;border-radius:3px"></div>
<div class="t" style="left:1579px;top:131px;font-size:15px;font-weight:bold;color:#c8c8c8;letter-spacing:0.4px;">ObjectSpawner</div>
<div class="a" style="left:1823px;top:130px;width:17px;height:17px;background:#2a2a2a;border:1px solid #222;border-radius:3px"></div>
<div class="t" style="left:1845px;top:131px;font-size:15px;color:#b8b8b8;letter-spacing:0.5px;">Static</div>
<div class="tri" style="left:1902px;top:135px"></div>
<div class="t" style="left:1546px;top:160.5px;font-size:15px;color:#b8b8b8;letter-spacing:0.5px;">Tag</div>
<div class="a" style="left:1579px;top:158px;width:142px;height:22px;background:#414141;border:1px solid #262626;border-radius:3px"></div>
<div class="t" style="left:1583px;top:160.5px;font-size:15px;color:#b8b8b8;letter-spacing:0.5px;">Untagged</div>
<div class="tri" style="left:1704px;top:166px"></div>
<div class="t" style="left:1739px;top:160.5px;font-size:15px;color:#b8b8b8;letter-spacing:0.5px;">Layer</div>
<div class="a" style="left:1786px;top:158px;width:129px;height:22px;background:#414141;border:1px solid #262626;border-radius:3px"></div>
<div class="t" style="left:1790px;top:160.5px;font-size:15px;color:#b8b8b8;letter-spacing:0.5px;">Default</div>
<div class="tri" style="left:1897px;top:166px"></div>
<div class="a" style="left:1493px;top:190px;width:427px;height:1px;background:#1f1f1f"></div>
<div class="a" style="left:1493px;top:191px;width:427px;height:26px;background:#323232;border-bottom:1px solid #262626"></div>
<svg style="left:1501px;top:200px" width="11" height="9"><path d="M0.5 0.5 H10.5 L5.5 8.5 Z" fill="#777"/></svg>
<svg style="left:1519px;top:196px" width="18" height="16"><path d="M9 1.5 V7" stroke="#9ad14a" stroke-width="2.6" stroke-linecap="round"/><path d="M8 9.5 L3 12.5" stroke="#4cb3e6" stroke-width="2.6" stroke-linecap="round"/><path d="M10.5 9.5 L15 12" stroke="#e2592c" stroke-width="2.6" stroke-linecap="round"/></svg>
<div class="t" style="left:1568px;top:197px;font-size:15px;font-weight:bold;color:#b8b8b8;letter-spacing:0.4px;">Transform</div>
<svg style="left:1847px;top:197.7px" width="13" height="13"><circle cx="6.5" cy="6.5" r="6.2" fill="#b4b4b4"/><text x="6.5" y="10.6" font-size="10.5" font-weight="bold" text-anchor="middle" fill="#323232" font-family="Liberation Sans">?</text></svg>
<svg style="left:1872px;top:197px" width="15" height="15"><path d="M1 4.6 H6.8 M10.4 4.6 H13 M1 10.9 H2.6 M6.2 10.9 H13" stroke="#b4b4b4" stroke-width="1.1"/><rect x="7.4" y="1.2" width="2.6" height="6.2" rx="1.2" fill="#b4b4b4"/><rect x="3.6" y="7.4" width="2.6" height="6.4" rx="0.8" fill="#b4b4b4"/></svg>
<svg style="left:1902px;top:197px" width="4" height="14"><circle cx="2" cy="2.4" r="1.5" fill="#b4b4b4"/><circle cx="2" cy="7" r="1.5" fill="#b4b4b4"/><circle cx="2" cy="11.6" r="1.5" fill="#b4b4b4"/></svg>
<div class="t" style="left:1517px;top:226px;font-size:15px;color:#b8b8b8;letter-spacing:0.5px;">Position</div>
<div class="t" style="left:1669px;top:226px;font-size:15px;color:#b8b8b8;letter-spacing:0.5px;">X</div>
<div class="a" style="left:1687px;top:223px;width:60px;height:22px;background:#222;border:1px solid #1a1a1a;border-radius:3px"></div>
<div class="t" style="left:1691px;top:227px;font-size:15px;color:#c4c4c4;letter-spacing:0.5px;">0</div>
<div class="t" style="left:1754px;top:226px;font-size:15px;color:#b8b8b8;letter-spacing:0.5px;">Y</div>
<div class="a" style="left:1771px;top:223px;width:60px;height:22px;background:#222;border:1px solid #1a1a1a;border-radius:3px"></div>
<div class="t" style="left:1775px;top:227px;font-size:15px;color:#c4c4c4;letter-spacing:0.5px;">0</div>
<div class="t" style="left:1838px;top:226px;font-size:15px;color:#b8b8b8;letter-spacing:0.5px;">Z</div>
<div class="a" style="left:1855px;top:223px;width:60px;height:22px;background:#222;border:1px solid #1a1a1a;border-radius:3px"></div>
<div class="t" style="left:1859px;top:227px;font-size:15px;color:#c4c4c4;letter-spacing:0.5px;">0</div>
<div class="t" style="left:1517px;top:251px;font-size:15px;color:#b8b8b8;letter-spacing:0.5px;">Rotation</div>
<div class="t" style="left:1669px;top:251px;font-size:15px;color:#b8b8b8;letter-spacing:0.5px;">X</div>
<div class="a" style="left:1687px;top:248px;width:60px;height:22px;background:#222;border:1px solid #1a1a1a;border-radius:3px"></div>
<div class="t" style="left:1691px;top:252px;font-size:15px;color:#c4c4c4;letter-spacing:0.5px;">0</div>
<div class="t" style="left:1754px;top:251px;font-size:15px;color:#b8b8b8;letter-spacing:0.5px;">Y</div>
<div class="a" style="left:1771px;top:248px;width:60px;height:22px;background:#222;border:1px solid #1a1a1a;border-radius:3px"></div>
<div class="t" style="left:1775px;top:252px;font-size:15px;color:#c4c4c4;letter-spacing:0.5px;">0</div>
<div class="t" style="left:1838px;top:251px;font-size:15px;color:#b8b8b8;letter-spacing:0.5px;">Z</div>
<div class="a" style="left:1855px;top:248px;width:60px;height:22px;background:#222;border:1px solid #1a1a1a;border-radius:3px"></div>
<div class="t" style="left:1859px;top:252px;font-size:15px;color:#c4c4c4;letter-spacing:0.5px;">0</div>
<div class="t" style="left:1517px;top:276px;font-size:15px;color:#b8b8b8;letter-spacing:0.5px;">Scale</div>
<div class="t" style="left:1669px;top:276px;font-size:15px;color:#b8b8b8;letter-spacing:0.5px;">X</div>
<div class="a" style="left:1687px;top:273px;width:60px;height:22px;background:#222;border:1px solid #1a1a1a;border-radius:3px"></div>
<div class="t" style="left:1691px;top:277px;font-size:15px;color:#c4c4c4;letter-spacing:0.5px;">1</div>
<div class="t" style="left:1754px;top:276px;font-size:15px;color:#b8b8b8;letter-spacing:0.5px;">Y</div>
<div class="a" style="left:1771px;top:273px;width:60px;height:22px;background:#222;border:1px solid #1a1a1a;border-radius:3px"></div>
<div class="t" style="left:1775px;top:277px;font-size:15px;color:#c4c4c4;letter-spacing:0.5px;">1</div>
<div class="t" style="left:1838px;top:276px;font-size:15px;color:#b8b8b8;letter-spacing:0.5px;">Z</div>
<div class="a" style="left:1855px;top:273px;width:60px;height:22px;background:#222;border:1px solid #1a1a1a;border-radius:3px"></div>
<div class="t" style="left:1859px;top:277px;font-size:15px;color:#c4c4c4;letter-spacing:0.5px;">1</div>
<svg style="left:1640px;top:277px" width="18" height="14"><path d="M6 3 H4 A4 4 0 0 0 4 11 H6 M12 3 H14 A4 4 0 0 1 14 11 H12 M6 7 H12" fill="none" stroke="#b0b0b0" stroke-width="1.4"/><path d="M3 1 L15 13" stroke="#b0b0b0" stroke-width="1.4"/></svg>
<div class="a" style="left:1493px;top:306px;width:427px;height:1px;background:#1f1f1f"></div>
<div class="a" style="left:1493px;top:307px;width:427px;height:26px;background:#323232;border-bottom:1px solid #262626"></div>
<svg style="left:1501px;top:316px" width="11" height="9"><path d="M0.5 0.5 H10.5 L5.5 8.5 Z" fill="#777"/></svg>
<svg style="left:1520px;top:312px" width="14" height="17"><path d="M1.5 0 H10 L13.5 3.5 V15.5 A1.5 1.5 0 0 1 12 17 H1.5 A1.5 1.5 0 0 1 0 15.5 V1.5 A1.5 1.5 0 0 1 1.5 0 Z" fill="#c2c2c2"/><path d="M6 4 L4.5 13 M9.5 4 L8 13 M3 7 H11.5 M2.5 10.5 H11" stroke="#1f5c22" stroke-width="1.6"/></svg>
<div class="t" style="left:1568px;top:313px;font-size:15px;font-weight:bold;color:#b8b8b8;letter-spacing:0.4px;">Object Spawner (Script)</div>
<svg style="left:1847px;top:313.7px" width="13" height="13"><circle cx="6.5" cy="6.5" r="6.2" fill="#b4b4b4"/><text x="6.5" y="10.6" font-size="10.5" font-weight="bold" text-anchor="middle" fill="#323232" font-family="Liberation Sans">?</text></svg>
<svg style="left:1872px;top:313px" width="15" height="15"><path d="M1 4.6 H6.8 M10.4 4.6 H13 M1 10.9 H2.6 M6.2 10.9 H13" stroke="#b4b4b4" stroke-width="1.1"/><rect x="7.4" y="1.2" width="2.6" height="6.2" rx="1.2" fill="#b4b4b4"/><rect x="3.6" y="7.4" width="2.6" height="6.4" rx="0.8" fill="#b4b4b4"/></svg>
<svg style="left:1902px;top:313px" width="4" height="14"><circle cx="2" cy="2.4" r="1.5" fill="#b4b4b4"/><circle cx="2" cy="7" r="1.5" fill="#b4b4b4"/><circle cx="2" cy="11.6" r="1.5" fill="#b4b4b4"/></svg>
<div class="t" style="left:1517px;top:343px;font-size:15px;color:#7e7e7e;letter-spacing:0.5px;">Script</div>
<div class="a" style="left:1668px;top:340px;width:246px;height:23px;background:#262626;border:1px solid #1e1e1e;border-radius:3px"></div>
<svg style="left:1674px;top:345px" width="11" height="14"><path d="M1 0 H8 L11 3 V13 A1 1 0 0 1 10 14 H1 A1 1 0 0 1 0 13 V1 A1 1 0 0 1 1 0 Z" fill="#7a7a7a"/><path d="M5 3 L4 11 M7.5 3 L6.5 11 M2.5 5.5 H9 M2 8.5 H8.5" stroke="#2c4a2c" stroke-width="1.1"/></svg>
<div class="t" style="left:1688px;top:343px;font-size:15px;color:#7e7e7e;letter-spacing:0.5px;">ObjectSpawner</div>
<svg style="left:1894px;top:344px" width="15" height="15"><circle cx="7.5" cy="7.5" r="6" fill="none" stroke="#7e7e7e" stroke-width="1.3"/><circle cx="7.5" cy="7.5" r="2.3" fill="#7e7e7e"/></svg>
<svg style="left:1501px;top:372px" width="11" height="9"><path d="M0.5 0.5 H10.5 L5.5 8.5 Z" fill="#777"/></svg>
<div class="t" style="left:1518px;top:368px;font-size:15px;font-weight:bold;color:#b8b8b8;letter-spacing:0.4px;">Array Prefabs</div>
<div class="a" style="left:1855px;top:365px;width:59px;height:22px;background:#222;border:1px solid #1a1a1a;border-radius:3px"></div>
<div class="t" style="left:1859px;top:369px;font-size:15px;color:#c4c4c4;letter-spacing:0.5px;">3</div>
<div class="a" style="left:1515px;top:392px;width:398px;height:82px;background:#333;border:1px solid #1e1e1e;border-radius:4px"></div>
<div class="a" style="left:1829px;top:473px;width:73px;height:26px;background:#333;border:1px solid #1e1e1e;border-top:none;border-radius:0 0 4px 4px"></div>
<svg style="left:1843px;top:478px" width="15" height="15"><path d="M7.5 1.5 V13.5 M1.5 7.5 H13.5" stroke="#b8b8b8" stroke-width="1.7"/></svg>
<div class="a" style="left:1876px;top:484.5px;width:10px;height:1.6px;background:#b8b8b8"></div>
<div class="a" style="left:1523px;top:405px;width:13px;height:1px;background:#6a6a6a"></div>
<div class="a" style="left:1523px;top:409px;width:13px;height:1px;background:#6a6a6a"></div>
<div class="t" style="left:1553px;top:400px;font-size:15px;color:#b8b8b8;letter-spacing:0.5px;">Element 0</div>
<div class="a" style="left:1665px;top:397px;width:241px;height:22px;background:#222;border:1px solid #1a1a1a;border-radius:3px"></div>
<div class="a" style="left:1882px;top:398px;width:23px;height:20px;background:#282828;border-radius:0 3px 3px 0"></div>
<svg style="left:1670px;top:401px" width="14" height="14"><path d="M7 0.5 L13.5 3.5 V10.5 L7 13.5 L0.5 10.5 V3.5 Z" fill="#4aa8d8"/><path d="M0.5 3.5 L7 6.5 L13.5 3.5 M7 6.5 V13.5" fill="none" stroke="#a8dcf4" stroke-width="1.1"/></svg>
<div class="t" style="left:1685px;top:400px;font-size:15px;color:#c4c4c4;letter-spacing:0.5px;">Square</div>
<svg style="left:1886px;top:400px" width="15" height="15"><circle cx="7.5" cy="7.5" r="6" fill="none" stroke="#c4c4c4" stroke-width="1.3"/><circle cx="7.5" cy="7.5" r="2.3" fill="#c4c4c4"/></svg>
<div class="a" style="left:1523px;top:430px;width:13px;height:1px;background:#6a6a6a"></div>
<div class="a" style="left:1523px;top:434px;width:13px;height:1px;background:#6a6a6a"></div>
<div class="t" style="left:1553px;top:425px;font-size:15px;color:#b8b8b8;letter-spacing:0.5px;">Element 1</div>
<div class="a" style="left:1665px;top:422px;width:241px;height:22px;background:#222;border:1px solid #1a1a1a;border-radius:3px"></div>
<div class="a" style="left:1882px;top:423px;width:23px;height:20px;background:#282828;border-radius:0 3px 3px 0"></div>
<svg style="left:1670px;top:426px" width="14" height="14"><path d="M7 0.5 L13.5 3.5 V10.5 L7 13.5 L0.5 10.5 V3.5 Z" fill="#4aa8d8"/><path d="M0.5 3.5 L7 6.5 L13.5 3.5 M7 6.5 V13.5" fill="none" stroke="#a8dcf4" stroke-width="1.1"/></svg>
<div class="t" style="left:1685px;top:425px;font-size:15px;color:#c4c4c4;letter-spacing:0.5px;">Circle</div>
<svg style="left:1886px;top:425px" width="15" height="15"><circle cx="7.5" cy="7.5" r="6" fill="none" stroke="#c4c4c4" stroke-width="1.3"/><circle cx="7.5" cy="7.5" r="2.3" fill="#c4c4c4"/></svg>
<div class="a" style="left:1523px;top:455px;width:13px;height:1px;background:#6a6a6a"></div>
<div class="a" style="left:1523px;top:459px;width:13px;height:1px;background:#6a6a6a"></div>
<div class="t" style="left:1553px;top:450px;font-size:15px;color:#b8b8b8;letter-spacing:0.5px;">Element 2</div>
<div class="a" style="left:1665px;top:447px;width:241px;height:22px;background:#222;border:1px solid #1a1a1a;border-radius:3px"></div>
<div class="a" style="left:1882px;top:448px;width:23px;height:20px;background:#282828;border-radius:0 3px 3px 0"></div>
<svg style="left:1670px;top:451px" width="14" height="14"><path d="M7 0.5 L13.5 3.5 V10.5 L7 13.5 L0.5 10.5 V3.5 Z" fill="#4aa8d8"/><path d="M0.5 3.5 L7 6.5 L13.5 3.5 M7 6.5 V13.5" fill="none" stroke="#a8dcf4" stroke-width="1.1"/></svg>
<div class="t" style="left:1685px;top:450px;font-size:15px;color:#c4c4c4;letter-spacing:0.5px;">Hexagon Flat-Top</div>
<svg style="left:1886px;top:450px" width="15" height="15"><circle cx="7.5" cy="7.5" r="6" fill="none" stroke="#c4c4c4" stroke-width="1.3"/><circle cx="7.5" cy="7.5" r="2.3" fill="#c4c4c4"/></svg>
<div class="t" style="left:1517px;top:507px;font-size:15px;color:#b8b8b8;letter-spacing:0.5px;">Object Spawn Count</div>
<div class="a" style="left:1668px;top:503px;width:246px;height:22px;background:#222;border:1px solid #1a1a1a;border-radius:3px"></div>
<div class="t" style="left:1673px;top:507px;font-size:15px;color:#c4c4c4;letter-spacing:0.5px;">30</div>
<div class="a" style="left:1506px;top:493px;width:212px;height:42px;border:5px solid #ec1c24"></div>
<div class="a" style="left:1493px;top:538px;width:427px;height:1px;background:#1f1f1f"></div>
<div class="a" style="left:1564px;top:550px;width:285px;height:28px;background:#464646;border:1px solid #222;border-radius:3px"></div>
<div class="t" style="left:1564px;top:556.5px;width:285px;text-align:center;font-size:15px;color:#c4c4c4;letter-spacing:0.5px">Add Component</div>
<!-- CONSOLE -->
<div class="a" style="left:1493px;top:699px;width:427px;height:2px;background:#161616"></div>
<div class="a" style="left:1493px;top:701px;width:427px;height:302px;background:#2d2d2d"></div>
<div class="a" style="left:1493px;top:701px;width:427px;height:24px;background:#222;border-radius:4px 4px 0 0"></div>
<div class="a" style="left:1493px;top:701px;width:110px;height:24px;background:#333;border-radius:4px 4px 0 0"></div>
<svg style="left:1504px;top:707px" width="13" height="13"><rect x="0.7" y="0.7" width="11.6" height="11.6" fill="none" stroke="#c4c4c4" stroke-width="1.3"/><path d="M3 4 H10 M3 6.5 H10 M3 9 H10" stroke="#c4c4c4" stroke-width="1.2"/></svg>
<div class="t" style="left:1523px;top:706px;font-size:15px;color:#b8b8b8;letter-spacing:0.5px;letter-spacing:0.7px">Console</div>
<svg style="left:1899px;top:705px" width="4" height="14"><circle cx="2" cy="2.4" r="1.5" fill="#b4b4b4"/><circle cx="2" cy="7" r="1.5" fill="#b4b4b4"/><circle cx="2" cy="11.6" r="1.5" fill="#b4b4b4"/></svg>
<div class="a" style="left:1493px;top:725px;width:427px;height:25px;background:#2e2e2e;border-bottom:1px solid #1e1e1e"></div>
<div class="a" style="left:1565px;top:725px;width:75px;height:24px;background:#3c3c3c"></div>
<div class="a" style="left:1564px;top:725px;width:1px;height:24px;background:#262626"></div>
<div class="a" style="left:1640px;top:725px;width:1px;height:24px;background:#262626"></div>
<div class="a" style="left:1544px;top:730px;width:1px;height:15px;background:#262626"></div>
<div class="t" style="left:1498px;top:731px;font-size:15px;color:#b8b8b8;letter-spacing:0.5px;">Clear</div>
<div class="tri" style="left:1549px;top:735px"></div>
<div class="t" style="left:1570px;top:731px;font-size:15px;color:#b8b8b8;letter-spacing:0.5px;">Collapse</div>
<div class="a" style="left:1793px;top:725px;width:127px;height:24px;background:#363636"></div>
<div class="a" style="left:1833px;top:725px;width:2px;height:24px;background:#262626"></div>
<div class="a" style="left:1876px;top:725px;width:2px;height:24px;background:#262626"></div>
<svg style="left:1799px;top:729px" width="16" height="17"><path d="M8 0.5 A7.5 7.5 0 1 0 8 15.5 L12 16.5 L11 13 A7.5 7.5 0 0 0 8 0.5 Z" fill="#7a7a7a"/><rect x="7" y="3.5" width="2" height="6" fill="#333"/><circle cx="8" cy="12" r="1.1" fill="#333"/></svg>
<div class="t" style="left:1818px;top:731px;font-size:15px;color:#b8b8b8;letter-spacing:0.5px;">0</div>
<svg style="left:1841px;top:729px" width="16" height="15"><path d="M8 0.5 L15.5 14.5 H0.5 Z" fill="#7a7a7a"/><rect x="7" y="5" width="2" height="5" fill="#333"/><circle cx="8" cy="12" r="1" fill="#333"/></svg>
<div class="t" style="left:1860px;top:731px;font-size:15px;color:#b8b8b8;letter-spacing:0.5px;">0</div>
<svg style="left:1883px;top:729px" width="16" height="16"><path d="M5 0.5 H11 L15.5 5 V11 L11 15.5 H5 L0.5 11 V5 Z" fill="#c4c4c4"/><rect x="7" y="3.5" width="2.2" height="6.5" fill="#333"/><circle cx="8.1" cy="12.3" r="1.2" fill="#333"/></svg>
<div class="t" style="left:1903px;top:731px;font-size:15px;color:#b8b8b8;letter-spacing:0.5px;">0</div>

<!-- STATUS -->
<div class="a" style="left:0;top:1003px;width:1920px;height:27px;background:#151515"></div>
<div class="a" style="left:0;top:1030px;width:1920px;height:5px;background:#2b3d48"></div>
<div class="a" style="left:312px;top:1030px;width:61px;height:5px;background:#5d6b72"></div>
<div class="a" style="left:1787px;top:1005px;width:1px;height:24px;background:#262626"></div>
<div class="a" style="left:1821px;top:1005px;width:1px;height:24px;background:#262626"></div>
<div class="a" style="left:1854px;top:1005px;width:1px;height:24px;background:#262626"></div>
<div class="a" style="left:1887px;top:1005px;width:1px;height:24px;background:#262626"></div>
<svg style="left:1794px;top:1009px" width="20" height="18"><ellipse cx="10" cy="10.5" rx="5.5" ry="6.5" fill="#a8a8a8"/><path d="M5 6 L3 3 M15 6 L17 3 M4.5 11 L1.5 12 M15.5 11 L18.5 12 M5 15 L3 17 M15 15 L17 17" stroke="#a8a8a8" stroke-width="1.2"/><path d="M1 1.5 L18 17" stroke="#151515" stroke-width="2.5"/><path d="M1.5 1 L17.5 17.5" stroke="#a8a8a8" stroke-width="0.9"/></svg>
<svg style="left:1829px;top:1009px" width="18" height="18"><ellipse cx="9" cy="4" rx="7" ry="3" fill="#a8a8a8"/><path d="M2 6 Q9 10 16 6 V9 Q9 13 2 9 Z M2 11 Q9 15 16 11 V14 Q9 18 2 14 Z" fill="#a8a8a8"/><path d="M1 1 L17 17" stroke="#151515" stroke-width="2.5"/><path d="M1.5 1 L16.5 17.5" stroke="#a8a8a8" stroke-width="0.9"/></svg>
<svg style="left:1861px;top:1009px" width="18" height="18"><path d="M3 6 A7.5 7.5 0 0 1 15 5 M15 12 A7.5 7.5 0 0 1 3 13" fill="none" stroke="#a8a8a8" stroke-width="1.8"/><path d="M15 1 V6 H10 M3 17 V12 H8" fill="#a8a8a8"/><circle cx="9" cy="9" r="3" fill="#a8a8a8"/><path d="M1 1 L17 17" stroke="#151515" stroke-width="2.5"/><path d="M1.5 1 L16.5 17.5" stroke="#a8a8a8" stroke-width="0.9"/></svg>
<svg style="left:1893px;top:1009px" width="18" height="18"><circle cx="9" cy="9" r="8" fill="none" stroke="#a8a8a8" stroke-width="1.1"/><path d="M5.5 9 L8 11.5 L12.5 7" fill="none" stroke="#a8a8a8" stroke-width="1.6"/></svg>
</div>
</body></html>
